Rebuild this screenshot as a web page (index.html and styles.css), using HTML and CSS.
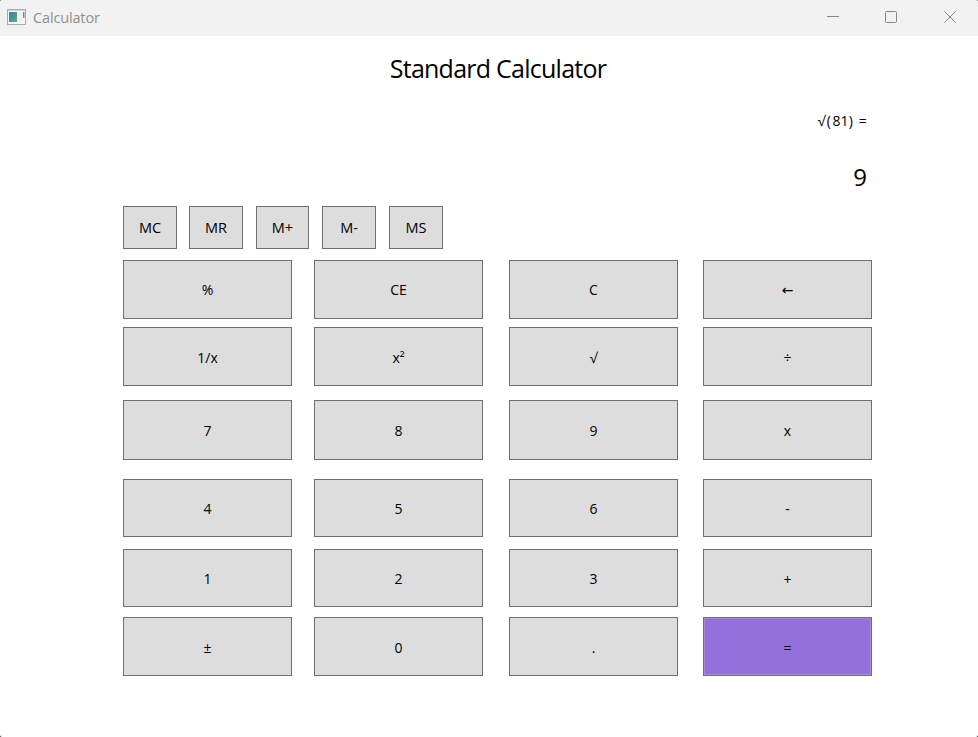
FILE: index.html
```html
<!DOCTYPE html>
<html lang="en">
<head>
<meta charset="utf-8">
<title>Calculator</title>
<link rel="stylesheet" href="styles.css">
</head>
<body>
<div class="window">
  <header class="titlebar">
    <svg class="app-icon" width="19" height="16" viewBox="0 0 19 16">
      <defs><linearGradient id="pane" x1="0" y1="0" x2="1" y2="1"><stop offset="0" stop-color="#3e7cae"/><stop offset="1" stop-color="#57ad78"/></linearGradient></defs>
      <rect x=".5" y=".5" width="18" height="15" fill="#f7f8f9" stroke="#a6abb3"/>
      <path d="M1 1h17" stroke="#a9aeba" stroke-width="1"/>
      <rect x="2" y="3" width="8" height="10" fill="url(#pane)"/>
      <rect x="11.5" y="3" width="3.5" height="10" fill="#ececee"/>
      <rect x="16" y="3" width="1.5" height="6" fill="url(#pane)"/>
    </svg>
    <span class="caption">Calculator</span>
    <div class="controls">
      <svg width="12" height="12" viewBox="0 0 12 12"><path d="M0 5.5h12"/></svg>
      <svg width="12" height="12" viewBox="0 0 12 12"><rect x=".5" y=".5" width="11" height="11" rx="1"/></svg>
      <svg width="12" height="12" viewBox="0 0 12 12"><path d="M.3 .3l11.4 11.4M11.7 .3L.3 11.7"/></svg>
    </div>
  </header>
  <main class="calculator">
    <h1 class="title">Standard Calculator</h1>
    <div class="expression">√(81) =</div>
    <div class="result">9</div>
    <div class="memory">
      <button>MC</button><button>MR</button><button>M+</button><button>M-</button><button>MS</button>
    </div>
    <div class="keys">
      <button>%</button><button>CE</button><button>C</button><button class="arrow">←</button>
      <button class="low">1/x</button><button class="low">x²</button><button class="low">√</button><button class="low">÷</button>
      <button>7</button><button>8</button><button>9</button><button>x</button>
      <button>4</button><button>5</button><button>6</button><button>-</button>
      <button>1</button><button>2</button><button>3</button><button class="low">+</button>
      <button class="low">±</button><button class="low">0</button><button class="low">.</button><button class="low equals">=</button>
    </div>
  </main>
</div>
</body>
</html>
```
FILE: styles.css
```css
* { box-sizing: border-box; }
body {
  margin: 0;
  background: #222;
  color: #000;
  font-family: "Open Sans", "Noto Sans", sans-serif;
  font-size: 14px;
}
.window {
  height: 737px;
  background: #fff;
  border-radius: 2px;
  overflow: hidden;
}
.titlebar {
  display: flex;
  height: 36px;
  padding: 0 22px 0 7px;
  background: #f2f2f2;
}
.app-icon { margin-top: 9px; }
.caption {
  margin-left: 7px;
  color: #8f8f8f;
  font-size: 14.5px;
  letter-spacing: -0.15px;
  line-height: 35px;
}
.controls {
  display: grid;
  grid-template-columns: 58px 59px 12px;
  margin: 11px 0 0 auto;
}
.controls svg { fill: none; stroke: #868686; }
.calculator { width: 749px; margin: 0 auto 0 123px; }
.title {
  width: 750px;
  margin: 0;
  padding-top: 14px;
  font-size: 25px;
  font-weight: 400;
  letter-spacing: -0.75px;
  line-height: 36px;
  text-align: center;
}
.expression {
  height: 20px;
  margin: 25px 5px 0 0;
  letter-spacing: 0.15px;
  word-spacing: 2px;
  line-height: 20px;
  text-align: right;
}
.expression::first-letter { letter-spacing: 1.5px; }
.result {
  height: 36px;
  margin: 28px 5px 0 0;
  font-size: 24px;
  line-height: 36px;
  text-align: right;
}
.memory {
  display: grid;
  grid-template-columns: 66px 67px 66px 67px 54px;
  height: 43px;
  margin-top: 11px;
}
.memory button { width: 54px; font-size: 14.5px; }
.memory button:nth-child(3) { width: 53px; }
.keys {
  display: grid;
  grid-template-columns: 191px 195px 194px 169px;
  grid-template-rows: 67px 73px 79px 70px 68px 59px;
  margin-top: 11px;
}
button {
  padding: 0;
  border: 1px solid #707070;
  background: #ddd;
  color: #000;
  font: inherit;
}
.keys button { width: 169px; height: 59px; }
.keys button:nth-child(n+9):nth-child(-n+12) { height: 60px; }
.keys button:nth-child(n+13):nth-child(-n+20) { height: 58px; }
.keys .low { padding-top: 2px; }
.keys .arrow { font-family: "DejaVu Sans", sans-serif; font-size: 14px; }
.keys .equals { background: #9370db; box-shadow: inset 0 0 0 1px #a68bd8; }
```
